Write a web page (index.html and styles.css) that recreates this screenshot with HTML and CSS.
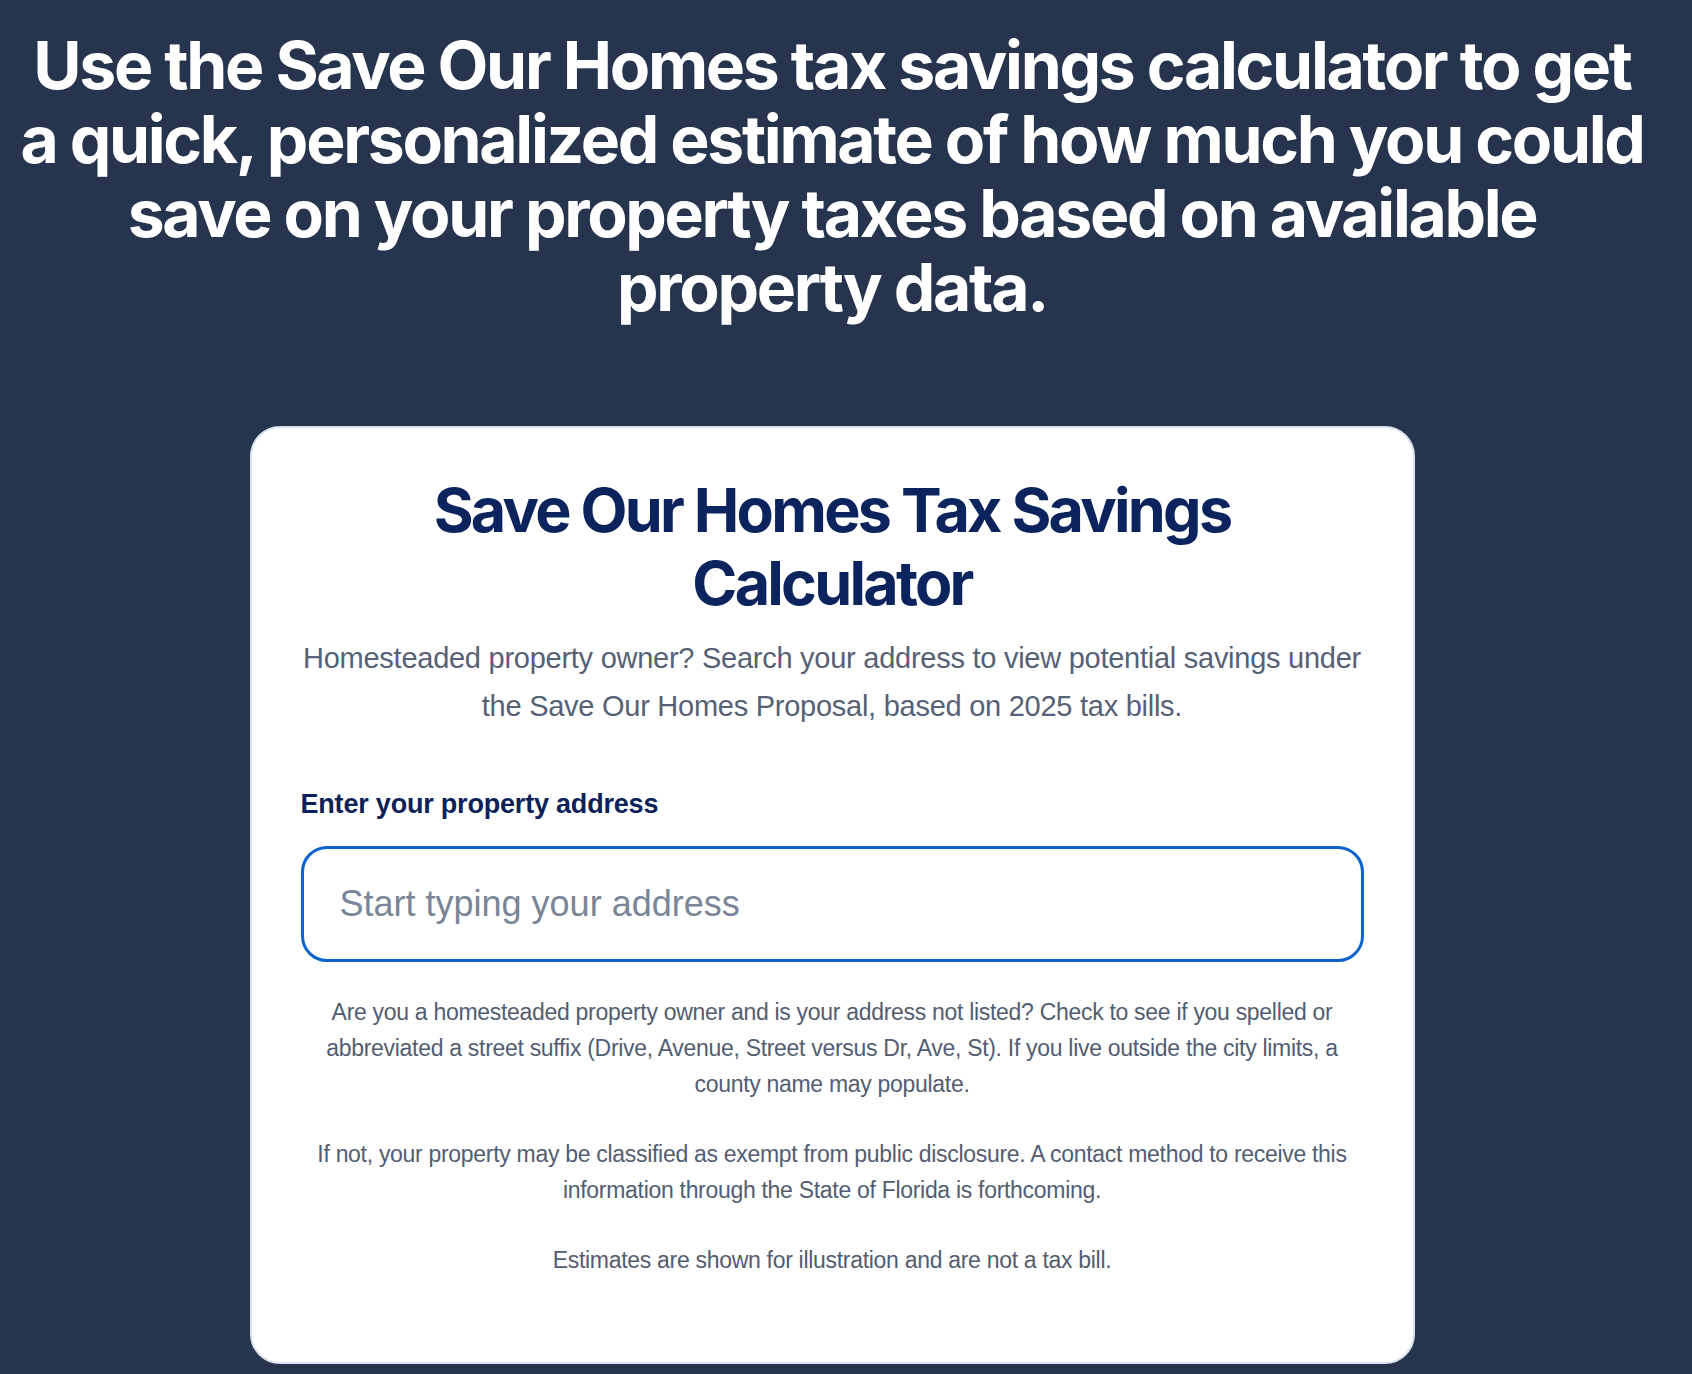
FILE: index.html
```html
<!DOCTYPE html>
<html lang="en">
<head>
<meta charset="utf-8">
<title>Save Our Homes Tax Savings Calculator</title>
<link rel="stylesheet" href="styles.css">
</head>
<body>
<main class="page">
  <h1 class="hero">Use the Save Our Homes tax savings calculator to get a quick, personalized estimate of how much you could save on your property taxes based on available property data.</h1>
  <section class="card">
    <h2 class="card-title">Save Our Homes Tax Savings Calculator</h2>
    <p class="card-sub">Homesteaded property owner? Search your address to view potential savings under the Save Our Homes Proposal, based on 2025 tax bills.</p>
    <label class="field-label" for="addr">Enter your property address</label>
    <input class="field-input" id="addr" type="text" placeholder="Start typing your address">
    <div class="notes">
      <p>Are you a homesteaded property owner and is your address not listed? Check to see if you spelled or abbreviated a street suffix (Drive, Avenue, Street versus Dr, Ave, St). If you live outside the city limits, a county name may populate.</p>
      <p>If not, your property may be classified as exempt from public disclosure. A contact method to receive this information through the State of Florida is forthcoming.</p>
      <p>Estimates are shown for illustration and are not a tax bill.</p>
    </div>
  </section>
</main>
</body>
</html>
```
FILE: styles.css
```css
html, body {
  margin: 0;
  padding: 0;
  background: #27344e;
}
body {
  font-family: "Liberation Sans", Arial, sans-serif;
}
.page {
  box-sizing: border-box;
  width: 1692px;
  padding: 28px 28px 0 0;
  display: flex;
  flex-direction: column;
  align-items: center;
}
.hero {
  margin: 0;
  max-width: 1641px;
  color: #ffffff;
  font-family: Inter, "Noto Sans", sans-serif;
  font-weight: 700;
  font-size: 66px;
  line-height: 74px;
  letter-spacing: -0.035em;
  text-align: center;
}
.card {
  box-sizing: border-box;
  width: 1165px;
  margin-top: 102px;
  background: #ffffff;
  border: 2px solid #d9e2ee;
  border-radius: 30px;
  padding: 46px 49px 84px;
  display: flex;
  flex-direction: column;
}
.card-title {
  margin: 0;
  color: #0b245e;
  font-family: Inter, "Noto Sans", sans-serif;
  font-weight: 700;
  font-size: 61px;
  line-height: 73px;
  letter-spacing: -0.045em;
  text-align: center;
}
.card-sub {
  margin: 14px 0 0;
  color: #566176;
  font-size: 29px;
  line-height: 48px;
  letter-spacing: -0.26px;
  text-align: center;
}
.field-label {
  margin-top: 58px;
  color: #0b2259;
  font-weight: 700;
  font-size: 27px;
  line-height: 32px;
  letter-spacing: -0.2px;
}
.field-input {
  box-sizing: border-box;
  margin-top: 26px;
  width: 100%;
  height: 116px;
  border: 3px solid #0b63cd;
  border-radius: 26px;
  padding: 0 36px;
  font-family: "Liberation Sans", Arial, sans-serif;
  font-size: 36px;
  color: #1f2937;
  background: #ffffff;
  outline: none;
}
.field-input::placeholder {
  color: #7a8597;
}
.notes {
  margin-top: 32px;
  padding: 0 16px;
  color: #535d71;
  font-size: 23px;
  line-height: 36px;
  letter-spacing: -0.3px;
  text-align: center;
}
.notes p {
  margin: 0 0 34px;
}
.notes p:last-child {
  margin-bottom: 0;
}
```
